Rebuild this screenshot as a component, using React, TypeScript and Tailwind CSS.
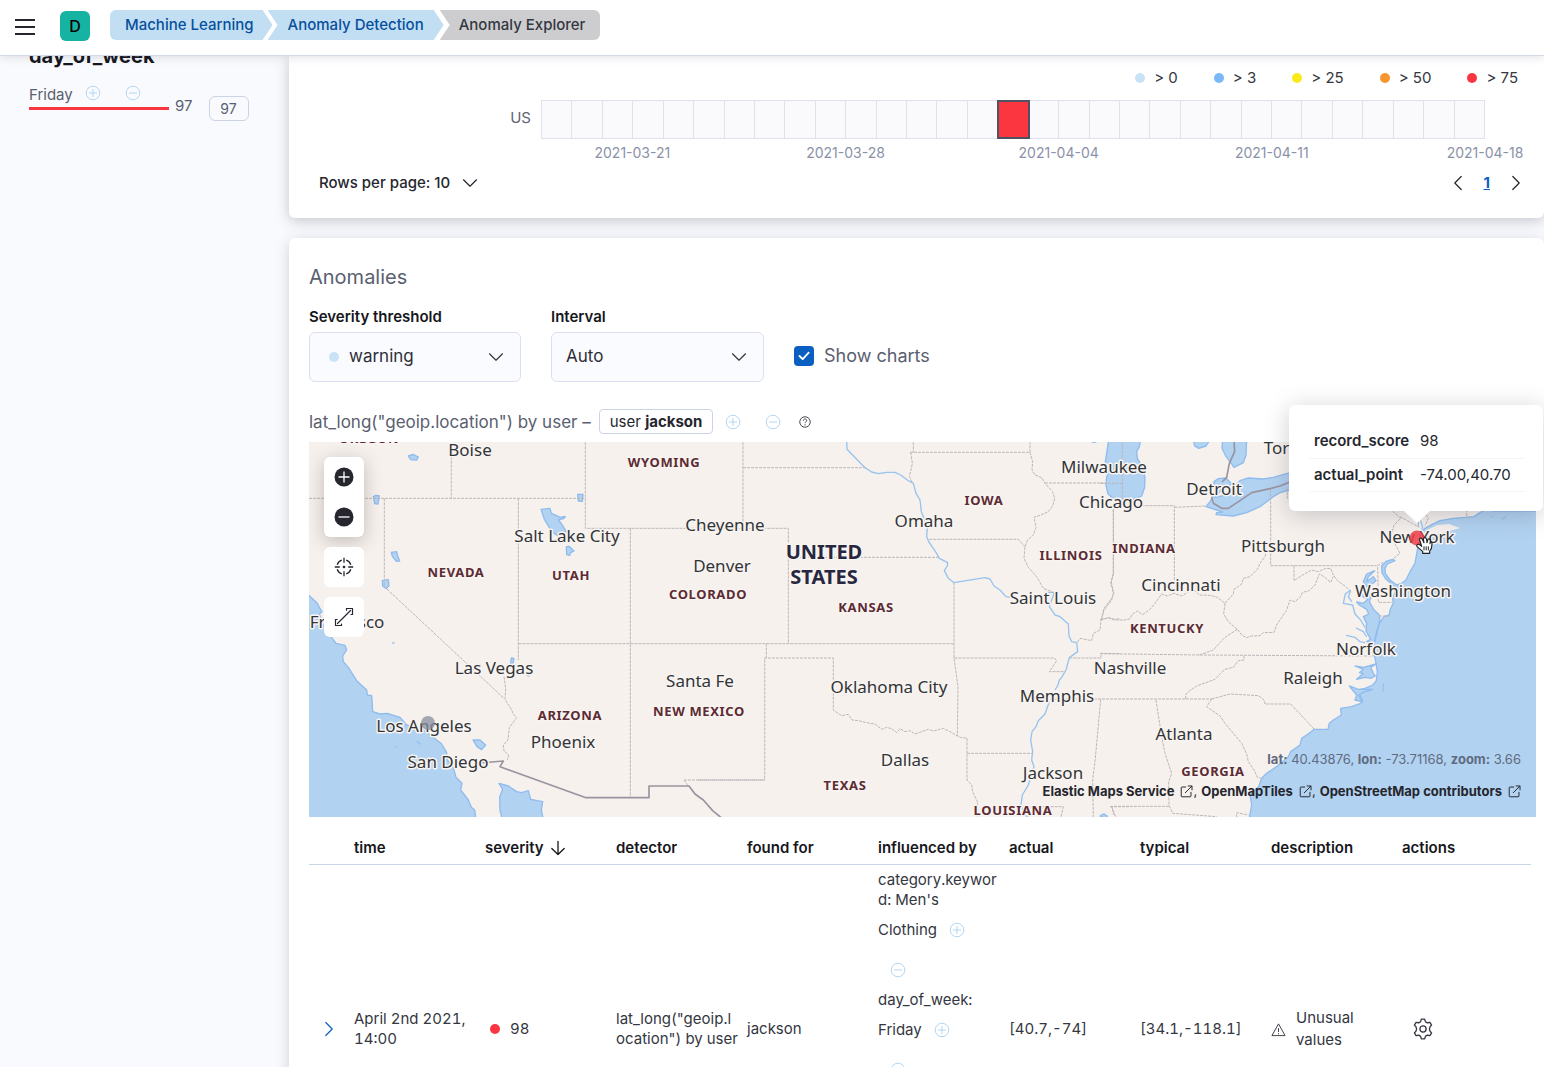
import React from "react";

type IconProps = { className?: string };

const PlusCircle = ({ className = "size-4" }: IconProps) => (
  <svg viewBox="0 0 16 16" fill="none" stroke="currentColor" className={className} aria-hidden="true">
    <circle cx="8" cy="8" r="6.8" />
    <path d="M8 4v8M4 8h8" />
  </svg>
);

const MinusCircle = ({ className = "size-4" }: IconProps) => (
  <svg viewBox="0 0 16 16" fill="none" stroke="currentColor" className={className} aria-hidden="true">
    <circle cx="8" cy="8" r="6.8" />
    <path d="M4 8h8" />
  </svg>
);

const Chevron = ({ className = "" }: IconProps) => (
  <svg viewBox="0 0 16 16" fill="none" stroke="currentColor" strokeWidth="1.2" strokeLinecap="round" strokeLinejoin="round" className={className} aria-hidden="true">
    <path d="M1.5 4.8 8 11.2l6.500-6.400" />
  </svg>
);

const Popout = () => (
  <svg viewBox="0 0 16 16" fill="none" stroke="currentColor" strokeWidth="1.2" strokeLinecap="round" strokeLinejoin="round" className="size-[13px]" aria-hidden="true">
    <path d="M7 2.500H2.500a1 1 0 0 0-1 1v10a1 1 0 0 0 1 1h10a1 1 0 0 0 1-1V9M10 1.200h4.800V6M14.500 1.500 6.500 9.500" />
  </svg>
);

const Gear = () => (
  <svg viewBox="0 0 20 20" fill="none" stroke="currentColor" strokeWidth="1.200" strokeLinejoin="round" className="size-[22px]" aria-hidden="true">
    <path d="M8.500 1h3l.6 1.900q.6 1.500 2.200 1.400l2-.4 1.500 2.600-1.400 1.500q-1.200 2 0 4l1.400 1.500-1.500 2.600-2-.4q-1.600-.1-2.200 1.400l-.6 1.900h-3l-.6-1.900q-.6-1.500-2.200-1.400l-2 .4-1.500-2.600 1.400-1.500q1.200-2 0-4l-1.400-1.500 1.500-2.600 2 .4q1.600.1 2.200-1.400z" />
    <circle cx="10" cy="10" r="2.800" />
  </svg>
);

function FilterButton({ kind, label }: { kind: "add" | "remove"; label: string }) {
  return (
    <button type="button" aria-label={label} className="flex size-10 shrink-0 items-center justify-center text-[#b3d6f2]">
      {kind === "add" ? <PlusCircle /> : <MinusCircle />}
    </button>
  );
}

function Header() {
  return (
    <header className="relative z-20 flex h-14 shrink-0 items-start border-b border-[#d3dae6] bg-white pt-[10px] pl-[15px] shadow-[0_2px_8px_rgba(60,65,80,0.14)]">
      <button type="button" aria-label="Toggle navigation" className="mt-[9px] flex h-4 w-5 flex-col justify-between">
        <span className="h-[2px] w-full bg-[#25262e]" />
        <span className="h-[2px] w-full bg-[#25262e]" />
        <span className="h-[2px] w-full bg-[#25262e]" />
      </button>
      <button type="button" aria-label="Default space" className="mt-px ml-[25px] flex size-[30px] items-center justify-center rounded-md bg-[#16b3a3] text-base font-medium text-black">
        D
      </button>
      <nav aria-label="Breadcrumbs" className="ml-5 flex text-[15px] leading-[30px] font-medium">
        <a href="#ml" className="rounded-l-md bg-[#c1def3] pr-[19px] pl-[15px] text-[#07509c] [clip-path:polygon(0_0,calc(100%-10px)_0,100%_50%,calc(100%-10px)_100%,0_100%)]">
          Machine Learning
        </a>
        <a href="#anomaly-detection" className="-ml-[5px] bg-[#c1def3] px-5 text-[#07509c] [clip-path:polygon(0_0,calc(100%-10px)_0,100%_50%,calc(100%-10px)_100%,0_100%,10px_50%)]">
          Anomaly Detection
        </a>
        <span aria-current="page" className="-ml-1 rounded-r-md bg-[#cdcdcf] pr-[15px] pl-[19px] text-[#343741] [clip-path:polygon(0_0,100%_0,100%_100%,0_100%,10px_50%)]">
          Anomaly Explorer
        </span>
      </nav>
    </header>
  );
}

function Influencers() {
  return (
    <aside className="w-[289px] shrink-0 px-[29px] text-[#5a6070]">
      <h2 className="-mt-3 text-xl leading-6 font-bold text-[#16171c]">day_of_week</h2>
      <div className="mt-[5px] flex">
        <div className="w-[140px]">
          <div className="flex h-10 items-center">
            <span className="pt-1 text-[15px]">Friday</span>
            <FilterButton kind="add" label="Add Friday filter" />
            <FilterButton kind="remove" label="Remove Friday filter" />
          </div>
          <div className="-mt-[6px] h-[3px] bg-[#fb3640]" />
        </div>
        <span className="mt-[23px] ml-[6px] text-[15px] leading-5">97</span>
        <span className="mt-[23px] ml-4 h-[25px] w-10 rounded-md border border-[#cdd3e6] text-center text-sm leading-[23px]">97</span>
      </div>
    </aside>
  );
}

const LEGEND = [
  { color: "bg-[#c8e3f6]", text: "> 0" },
  { color: "bg-[#79b9f8]", text: "> 3" },
  { color: "bg-[#fbea1a]", text: "> 25" },
  { color: "bg-[#f79530]", text: "> 50" },
  { color: "bg-[#fb3640]", text: "> 75" },
];

const TICKS = [
  { date: "2021-03-21", place: "col-start-1 col-span-6 text-center" },
  { date: "2021-03-28", place: "col-start-8 col-span-6 text-center" },
  { date: "2021-04-04", place: "col-start-15 col-span-6 text-center" },
  { date: "2021-04-11", place: "col-start-22 col-span-6 text-center" },
  { date: "2021-04-18", place: "col-start-29 col-span-3 justify-self-end translate-x-1/2" },
];

function Swimlane() {
  return (
    <section className="rounded-b-md bg-white pr-2 pb-[25px] pl-5 shadow-[0_3px_14px_rgba(60,65,80,0.28)]">
      <ul className="flex justify-end gap-9 pt-3 pr-[18px] text-[15px] leading-5 text-[#343741]">
        {LEGEND.map((l) => (
          <li key={l.text} className="flex items-center gap-[9px]">
            <span className={`size-[10px] rounded-full ${l.color}`} />
            {l.text}
          </li>
        ))}
      </ul>
      <div className="mt-3 flex pr-[51px]">
        <div className="w-[232px] shrink-0 pr-[10px] text-right text-[15px] leading-9 text-[#5f6575]">US</div>
        <div className="min-w-0 flex-1">
          <div className="grid h-[39px] grid-cols-[repeat(31,minmax(0,1fr))] border-y border-r border-[#dde2ed] bg-[#fafafc]">
            {Array.from({ length: 31 }, (_, i) => (
              <div
                key={i}
                className={
                  i === 15
                    ? "relative -mt-px -mr-[2px] -mb-px border-2 border-[#4f5361] bg-[#fb3640]"
                    : "border-l border-[#dde2ed]"
                }
              />
            ))}
          </div>
          <div className="mt-1 grid grid-cols-[repeat(31,minmax(0,1fr))] text-sm leading-5 text-[#8a92a8]">
            {TICKS.map((t) => (
              <span key={t.date} className={`row-start-1 whitespace-nowrap ${t.place}`}>
                {t.date}
              </span>
            ))}
          </div>
        </div>
      </div>
      <div className="mt-[10px] flex items-center justify-between pr-3 pl-[10px] text-[15px] leading-5 text-[#25262e]">
        <button type="button" className="flex items-center gap-3 font-medium">
          Rows per page: 10 <Chevron className="size-4" />
        </button>
        <nav aria-label="Pages" className="flex items-center gap-[18px]">
          <button type="button" aria-label="Previous page">
            <Chevron className="size-4 rotate-90" />
          </button>
          <a href="#page-1" className="font-bold text-[#0b5fc1] underline">
            1
          </a>
          <button type="button" aria-label="Next page">
            <Chevron className="size-4 -rotate-90" />
          </button>
        </nav>
      </div>
    </section>
  );
}

function Controls() {
  return (
    <div className="mt-4 flex items-end gap-[30px]">
      <div>
        <label htmlFor="severity" className="block text-[15px] leading-5 font-semibold text-[#16171c]">
          Severity threshold
        </label>
        <div className="relative mt-[5px]">
          <select id="severity" className="h-[50px] w-[212px] appearance-none rounded-md border border-[#dcdff0] bg-[#fafbfe] pl-[39px] text-[17px] text-[#2c2e38]">
            <option>warning</option>
          </select>
          <span className="pointer-events-none absolute top-5 left-5 size-[10px] rounded-full bg-[#c8e3f6]" />
          <Chevron className="pointer-events-none absolute top-[17px] right-[17px] size-4 text-[#343741]" />
        </div>
      </div>
      <div>
        <label htmlFor="interval" className="block text-[15px] leading-5 font-semibold text-[#16171c]">
          Interval
        </label>
        <div className="relative mt-[5px]">
          <select id="interval" className="h-[50px] w-[213px] appearance-none rounded-md border border-[#dcdff0] bg-[#fafbfe] pl-[14px] text-[17px] text-[#2c2e38]">
            <option>Auto</option>
          </select>
          <Chevron className="pointer-events-none absolute top-[17px] right-[17px] size-4 text-[#343741]" />
        </div>
      </div>
      <label htmlFor="show-charts" className="relative mb-3 flex items-center gap-[10px] text-lg text-[#5a6070]">
        <input id="show-charts" type="checkbox" defaultChecked className="size-5 appearance-none rounded-[4px] bg-[#0b5fc1]" />
        <svg viewBox="0 0 20 20" fill="none" stroke="white" strokeWidth="1.8" strokeLinecap="round" strokeLinejoin="round" className="pointer-events-none absolute left-0 size-5" aria-hidden="true">
          <path d="m5.500 10 3.200 3.200 6-6.500" />
        </svg>
        Show charts
      </label>
    </div>
  );
}

const CITIES: [string, number, number][] = [
  ["Boise", 470, 456],
  ["Salt Lake City", 567, 542],
  ["Cheyenne", 725, 531],
  ["Denver", 722, 572],
  ["Santa Fe", 700, 687],
  ["Las Vegas", 494, 674],
  ["Los Angeles", 424, 732],
  ["San Diego", 448, 768],
  ["Phoenix", 563, 748],
  ["Omaha", 924, 527],
  ["Oklahoma City", 889, 693],
  ["Dallas", 905, 766],
  ["Saint Louis", 1053, 604],
  ["Memphis", 1057, 702],
  ["Jackson", 1053, 779],
  ["Nashville", 1130, 674],
  ["Milwaukee", 1104, 473],
  ["Chicago", 1111, 508],
  ["Detroit", 1214, 495],
  ["Pittsburgh", 1283, 552],
  ["Cincinnati", 1181, 591],
  ["New York", 1417, 543],
  ["Washington", 1403, 597],
  ["Norfolk", 1366, 655],
  ["Raleigh", 1313, 684],
  ["Atlanta", 1184, 740],
  ["Toronto", 1295, 454],
  ["Francisco", 347, 628],
];

const STATES: [string, number, number][] = [
  ["OREGON", 369, 443],
  ["WYOMING", 664, 467],
  ["NEVADA", 456, 577],
  ["UTAH", 571, 580],
  ["COLORADO", 708, 599],
  ["ARIZONA", 570, 720],
  ["NEW MEXICO", 699, 716],
  ["KANSAS", 866, 612],
  ["TEXAS", 845, 790],
  ["IOWA", 984, 505],
  ["ILLINOIS", 1071, 560],
  ["INDIANA", 1144, 553],
  ["KENTUCKY", 1167, 633],
  ["GEORGIA", 1213, 776],
  ["LOUISIANA", 1013, 815],
];

const NATION = "UNITED STATES".split(" ");

/* The base map is digitised in three tiles, west to east, each at three units per map pixel. */
const TILES = [
  {
    transform: "translate(300 430) scale(0.33333)",
    water: [
      "M20 490L52 520 58 532 66 545 58 552 64 568 72 590 95 622 108 640 135 646 140 660 128 678 130 695 145 712 170 752 200 780 202 795 215 797 218 845 240 852 262 850 300 862 320 885 370 900 398 920 425 942 440 968 442 990 460 1012 468 1042 486 1060 482 1080 505 1110 514 1132 524 1140 528 1170 20 1170Z",
      "M597 1060L625 1068 650 1085 665 1088 685 1082 692 1108 728 1115 724 1140 730 1170 607 1170 600 1140 599 1100 608 1078Z",
      "M325 78l14-5 16 8-5 9-18-1z",
      "M220 200l8-4 10 2-4 24-10-1z",
      "M833 193h16l-2 21-12-1z",
      "M723 238L750 235 754 250 770 257 780 262 796 259 792 265 775 270 785 282 799 305 775 318 762 310 748 292 733 268Z",
      "M799 350l8-1 15 14-10 5-3 8-9-2z",
      "M274 367l16-2 3 13 6 15-10 1-12-15z",
      "M247 452l18-3 2 18-8 9-11-8z",
      "M519 930l21 0 17 15-12 14-14-9z",
      "M634 684l8 2-5 22-6-2z",
    ],
    rivers: ["M276 639h8", "M350 935l14 8", "M284 950l6 2", "M680 736l10 2"],
    borders: [
      "M27 205H856",
      "M454 80V205",
      "M253 205V470L612 805",
      "M655 205V690",
      "M856 37V295H1465V641",
      "M655 641H1963",
      "M991 295V1103",
      "M612 740L617 775 615 808 635 840 640 852 650 863 628 893 624 930 610 945 612 963 626 975 622 990",
      "M1152 1050H1394",
      "M1152 1050L1165 1068",
    ],
    frontier: ["M540 999L610 993 600 1010 858 1103 1047 1103 1047 1068 1167 1068 1185 1092 1210 1110 1238 1142 1266 1165"],
  },
  {
    transform: "translate(700 430) scale(0.33333)",
    water: ["M1205 1156l8-4 8 10-6 4z"],
    rivers: [
      "M440 30L441 58 495 113 515 126 535 131 560 127 585 127 602 135 622 150 640 160 648 190 660 210 664 245 672 265 682 290 680 320 688 338 710 370 718 385 743 398 742 408 733 422 745 445 762 458 855 443 870 447 882 468 900 480 918 500 932 502",
      "M1040 487L1063 488 1055 510 1048 530 1065 555 1080 560 1105 582 1107 618 1115 635 1130 638 1133 665 1108 683 1098 720 1085 742 1078 750 1074 765 1065 780",
      "M1048 815L1035 852 1015 872 1008 890 996 905 992 930 998 965 995 990 1002 1010 985 1065 967 1095 963 1125 972 1150 990 1170",
      "M1175 37h14",
    ],
    borders: [
      "M129 37V295",
      "M129 113H495",
      "M264 382H715",
      "M640 37V67",
      "M630 67H990V37",
      "M632 67L637 100 633 120 628 138 637 158",
      "M990 67L998 95 996 120 1005 135 1025 143 1035 160 1058 185 1064 205 1058 228 1045 245 1020 256 1002 262 1008 292 1000 315 983 330 975 350 972 385 985 412 1010 440 1030 475 1063 488",
      "M1035 159H1270",
      "M688 328H955L975 350",
      "M762 458V684L767 720 774 770 772 918",
      "M199 641V684",
      "M-6 1050H194V684H400V840L425 857 445 853 456 870 475 872 510 880 525 882 545 898 560 892 575 896 590 908 600 896 615 905 630 902 645 912 665 905 685 898 700 903 730 895 750 905 772 918 782 922 801 925",
      "M763 684H1063L1070 692 1048 725H1095",
      "M1108 684H1203V670L1260 671",
      "M801 925V1050L815 1065 818 1085 832 1115 834 1165",
      "M801 970H996",
      "M1050 807H1535",
      "M1202 808L1186 985 1178 1050 1180 1165",
      "M980 1130H1090L1082 1165",
      "M1235 1130l12 30M1230 1130h60",
      "M1240 240V430L1234 455 1240 490 1235 510 1212 540 1203 570 1200 600 1180 610 1175 632 1140 625 1130 640",
      "M1203 570L1225 563 1240 570 1260 565",
    ],
    frontier: [],
  },
  {
    transform: "translate(1100 390) scale(0.33333)",
    water: [
      "M26 150H122L118 170 110 185 112 205 124 225 135 262 134 292 125 318 100 328 75 335 45 330 24 312 18 285 20 262 27 240 16 215 20 190Z",
      "M368 150H440L438 195 430 218 402 232 390 215 376 196 366 175Z",
      "M280 150H330L318 168 296 175 284 168Z",
      "M342 275L355 266 378 264 395 282 378 292 358 306 345 322 365 318 385 305 405 288 420 272 445 264 490 267 520 262 570 248V300L540 308 520 320 500 335 480 350 440 368 400 378 348 374 350 368 368 366 318 350 330 335 340 318 350 300 342 290Z",
      "M1320 363H1175L1165 355 1140 368 1122 380 1060 385 1020 392 998 402 975 415 958 430 962 450 952 480 945 520 930 545 918 570 905 580 890 585 870 570 856 550 855 535 862 522 885 512 878 508 858 514 845 528 846 548 858 568 878 584 885 605 878 625 880 640 870 660 868 675 852 680 838 700 832 722 828 742 820 765 818 785 824 800 828 820 832 845 829 872 818 885 795 895 772 900 788 932 782 940 755 950 722 955 724 975 700 990 688 1000 684 1018 643 1018 620 1035 605 1045 600 1065 572 1085 565 1100 530 1130 500 1150 485 1165 476 1190 450 1215 455 1245 447 1290 1320 1290Z",
      "M824 542L800 552 790 575 806 598 778 605 785 618 804 628 790 640 770 636 778 645 800 658 806 672 790 680 800 700 798 722 812 748 800 755 822 760 830 725 840 690 838 675 822 660 808 635 815 618 805 600 812 585 828 572 820 560 800 575 805 560Z",
      "M765 828L790 832 828 822 812 832 820 850 826 858 812 865 795 862 770 868 790 850 778 848 790 838Z",
      "M748 888L775 898 818 898 795 905 775 915 786 935 765 930 770 915Z",
      "M0 1278l10-6 12 6-6 8z",
    ],
    rivers: [
      "M752 600L736 612 730 640 758 645 765 672 782 690 795 712",
      "M752 602L745 620 755 635",
      "M738 736L765 742 780 755 795 758",
      "M768 714L790 725 800 740",
      "M962 392L968 412 960 430",
      "M955 395v15",
      "M1172 380h6M1205 388l12-8M1240 366l6-2",
      "M850 880v25",
    ],
    borders: [
      "M67 157V330",
      "M0 280H72",
      "M125 347H223V580",
      "M223 352L318 348",
      "M40 345V552L32 580 42 610 35 625 12 655 5 690",
      "M0 690L28 683 50 690 75 690 90 686 98 672 112 663 128 674 150 658 165 640 185 612 202 618 222 610 245 618 262 608 280 598 298 615 330 616 352 622 375 640 400 612 402 598 425 582 430 565 450 560 472 538 480 520 495 500 500 480",
      "M512 298V527H830",
      "M562 295V325H572",
      "M582 527V572L600 560 620 548 635 540 655 545 675 536 692 535 700 555 712 572 735 588 750 602",
      "M375 640L371 672 385 695 412 718 425 735 440 743 455 738 480 737 490 728 522 727 530 705 560 660 570 630 585 635 600 622 608 607 628 602 645 585 658 552 672 560 692 577 700 560",
      "M412 718L375 742 360 758 340 780 298 795",
      "M0 791L300 795 820 798",
      "M432 797V810L415 812 400 832 375 838 362 850 345 868 290 888 268 903 258 912 257 927",
      "M335 927L390 912 475 917 492 930 495 942H572L643 1018",
      "M335 927L320 950 360 978 375 1000 400 1030 425 1060 440 1092 445 1115 462 1140 472 1162 485 1165",
      "M168 930L185 1040 195 1090 215 1150 206 1175 207 1245 218 1270 350 1280",
      "M207 1249H35L42 1275",
      "M410 1282V1268L445 1275",
      "M850 517L833 527 835 637H878",
      "M838 678H868",
      "M878 363L902 385 882 405 873 440 900 490 878 508",
      "M900 380L958 412",
      "M972 363L985 385 975 408",
      "M1100 345V382H1110",
    ],
    frontier: [
      "M402 150L404 185 388 220 380 262 366 276",
      "M335 320L340 340 365 355 385 355 420 332 455 308 510 296 540 288 570 276",
    ],
  },
];

const HALO = "[paint-order:stroke] stroke-[#f8f4f1] [stroke-linejoin:round]";

function BaseMap() {
  return (
    <svg viewBox="309 442 1227 375" preserveAspectRatio="xMidYMid slice" className="h-[375px] w-full bg-[#f6f1ed]" role="img" aria-label="Map of the United States">
      {TILES.map((t) => (
        <g key={t.transform} transform={t.transform} fill="none" strokeLinejoin="round">
          {t.water.map((d) => (
            <path key={d} d={d} fill="#b2d2f1" stroke="#8fbcee" strokeWidth="4" />
          ))}
          {t.rivers.map((d) => (
            <path key={d} d={d} stroke="#97c3ef" strokeWidth="4" />
          ))}
          {t.borders.map((d) => (
            <path key={d} d={d} stroke="#bcb6ba" strokeWidth="3" strokeDasharray="9 3" />
          ))}
          {t.frontier.map((d) => (
            <path key={d} d={d} stroke="#9a93a0" strokeWidth="5" />
          ))}
        </g>
      ))}
      <path d="M1425 531l12-6 12-1 11 4-14 4-14 3-8 0z" fill="#f6f1ed" />
      <g textAnchor="middle" className={`fill-[#333438] font-['Noto_Sans',sans-serif] text-[17px] ${HALO}`} strokeWidth="3">
        {CITIES.map(([name, x, y]) => (
          <text key={name} x={x} y={y}>
            {name}
          </text>
        ))}
      </g>
      <g textAnchor="middle" className={`fill-[#5d2b33] font-['Noto_Sans',sans-serif] text-[13px] font-bold tracking-wider ${HALO}`} strokeWidth="3">
        {STATES.map(([name, x, y]) => (
          <text key={name} x={x} y={y}>
            {name}
          </text>
        ))}
      </g>
      <g textAnchor="middle" className={`fill-[#272740] font-['Noto_Sans',sans-serif] text-xl font-bold ${HALO}`} strokeWidth="3">
        {NATION.map((word, i) => (
          <text key={word} x="824" y={559 + i * 25}>
            {word}
          </text>
        ))}
      </g>
      <circle cx="428" cy="723" r="7" fill="#868d9f" fillOpacity="0.75" />
      <circle cx="1417" cy="538" r="7.500" fill="#f03e49" fillOpacity="0.85" />
      <g transform="translate(1330 500) scale(0.33333)" stroke="#222" strokeLinejoin="round">
        <path
          d="M270 123C265 114 274 111 278 120L282 128 280 119C280 111 289 111 290 119L291 128 293 121C294 114 302 116 301 123L300 131C301 124 307 126 306 132L304 146 299 153V160H278V154L261 140C258 134 265 130 270 135L275 139Z"
          fill="white"
          strokeWidth="3.500"
        />
        <path d="M282 139v12M288.500 139v12M295 139v12" fill="none" strokeWidth="3" />
      </g>
    </svg>
  );
}

const SOURCES = ["Elastic Maps Service", "OpenMapTiles", "OpenStreetMap contributors"];

function AnomalyMap() {
  return (
    <div className="relative mt-2 text-[#25262e]">
      <div className="h-[375px] overflow-hidden">
        <BaseMap />
      </div>
      <div className="absolute top-[15px] left-[15px] flex w-10 flex-col gap-[10px]">
        <div className="rounded-md bg-white shadow-[0_4px_18px_rgba(60,50,40,0.28)]">
          <button type="button" aria-label="Zoom in" className="flex size-10 items-center justify-center">
            <svg viewBox="0 0 20 20" className="size-5" stroke="white" strokeWidth="1.300" aria-hidden="true">
              <circle cx="10" cy="10" r="9.500" fill="#25262e" stroke="none" />
              <path d="M10 4.500v11M4.500 10h11" />
            </svg>
          </button>
          <button type="button" aria-label="Zoom out" className="flex size-10 items-center justify-center">
            <svg viewBox="0 0 20 20" className="size-5" stroke="white" strokeWidth="1.300" aria-hidden="true">
              <circle cx="10" cy="10" r="9.500" fill="#25262e" stroke="none" />
              <path d="M4.500 10h11" />
            </svg>
          </button>
        </div>
        <button type="button" aria-label="Fit to data" className="flex size-10 items-center justify-center rounded-md bg-white">
          <svg viewBox="0 0 20 20" className="size-5" fill="none" stroke="currentColor" strokeWidth="1.300" aria-hidden="true">
            <path d="M12.200 3.200a7.200 7.200 0 0 1 4.600 4.600M16.800 12.200a7.200 7.200 0 0 1-4.600 4.600M7.800 16.800a7.200 7.200 0 0 1-4.600-4.600M3.200 7.800a7.200 7.200 0 0 1 4.600-4.600M10 .8v5M10 14.200v5M.8 10h5M14.200 10h5" />
            <circle cx="10" cy="10" r="1.300" fill="currentColor" stroke="none" />
          </svg>
        </button>
        <button type="button" aria-label="Full screen" className="flex size-10 items-center justify-center rounded-md bg-white">
          <svg viewBox="0 0 20 20" className="size-5" fill="none" stroke="currentColor" strokeWidth="1.200" strokeLinecap="round" strokeLinejoin="round" aria-hidden="true">
            <path d="M3.500 16.500l13-13M12.500 1.500h6v6M1.500 12.500v6h6" />
            <path d="M12.500 1.500v1.700M17 7.500h1.500M1.500 12.500h1.700M7.500 18.500V17" />
          </svg>
        </button>
      </div>
      <div className="absolute right-[15px] bottom-4 flex flex-col items-end gap-3 text-[13px] leading-5">
        <p className="text-[#5f6b80]">
          <strong>lat:</strong> 40.43876, <strong>lon:</strong> -73.71168, <strong>zoom:</strong> 3.66
        </p>
        <p className="flex font-bold">
          {SOURCES.map((s, i) => (
            <React.Fragment key={s}>
              <a href="#source" className="flex items-center gap-[6px]">
                {s} <Popout />
              </a>
              {i < SOURCES.length - 1 && <span className="mr-1 font-normal">,</span>}
            </React.Fragment>
          ))}
        </p>
      </div>
      <div className="absolute -top-[37px] -right-[7px] h-[106px] w-[254px] rounded-md bg-white px-5 pt-5 text-[15px] shadow-[0_4px_24px_rgba(60,60,80,0.26)]">
        <table className="w-[216px] leading-5">
          <tbody>
            {[
              ["record_score", "98"],
              ["actual_point", "-74.00,40.70"],
            ].map(([k, v]) => (
              <tr key={k} className="h-[33px] border-b border-[#f4f5f8]">
                <th scope="row" className="w-[111px] pl-[5px] text-left text-[15px] font-semibold">
                  {k}
                </th>
                <td>{v}</td>
              </tr>
            ))}
          </tbody>
        </table>
        <div className="absolute top-full left-[115px] h-3 w-[26px] bg-white [clip-path:polygon(0_0,100%_0,50%_100%)]" />
      </div>
    </div>
  );
}

function Influence({ text, last }: { text: string; last: string }) {
  return (
    <div>
      <div className="w-[122px] break-all">{text}</div>
      <div className="flex h-10 items-center">
        {last}
        <FilterButton kind="add" label={`Add ${last} filter`} />
      </div>
      <FilterButton kind="remove" label={`Remove ${last} filter`} />
    </div>
  );
}

const HEADINGS = ["time", "severity", "detector", "found for", "influenced by", "actual", "typical", "description", "actions"];

function AnomaliesTable() {
  return (
    <div className="pr-[5px]">
      <table className="mt-[15px] w-full table-fixed text-left text-[15px] leading-5 text-[#343741]">
        <thead>
          <tr className="h-8 border-b border-[#ccd6ea] text-[#16171c]">
            <th className="w-[45px]" aria-label="Expand" />
            {HEADINGS.map((h) => (
              <th key={h} scope="col" className="w-[131px] font-semibold whitespace-nowrap last:w-auto">
                {h === "severity" ? (
                  <button type="button" className="flex items-center gap-[6px]">
                    severity
                    <svg viewBox="0 0 16 16" className="size-4" fill="none" stroke="currentColor" strokeWidth="1.300" strokeLinecap="round" strokeLinejoin="round" aria-hidden="true">
                      <path d="M8 1.500v13M1.800 8.500 8 14.500l6.200-6" />
                    </svg>
                  </button>
                ) : (
                  h
                )}
              </th>
            ))}
          </tr>
        </thead>
        <tbody>
          <tr className="h-[330px] tabular-nums">
            <td className="pl-3 text-[#0b5fc1]">
              <button type="button" aria-label="Show details" className="block">
                <Chevron className="size-4 -rotate-90" />
              </button>
            </td>
            <td>April 2nd 2021, 14:00</td>
            <td>
              <span className="flex items-center gap-[10px] pl-[5px]">
                <span className="size-[10px] rounded-full bg-[#fb3640]" />
                98
              </span>
            </td>
            <td>
              <div className="w-[122px] break-all">lat_long("geoip.location") by user</div>
            </td>
            <td>jackson</td>
            <td className="pt-[5px] align-top">
              <Influence text="category.keyword: Men's" last="Clothing" />
              <Influence text="day_of_week:" last="Friday" />
            </td>
            <td>[40.7,-74]</td>
            <td>[34.1,-118.1]</td>
            <td>
              <div className="flex items-center gap-[10px] leading-[22px]">
                <svg viewBox="0 0 16 16" className="size-[15px] shrink-0" fill="none" stroke="currentColor" strokeLinejoin="round" aria-hidden="true">
                  <path d="M8 2 15 14.500H1zM8 6.500v4.200M8 12v1.200" />
                </svg>
                Unusual values
              </div>
            </td>
            <td className="pl-[10px]">
              <button type="button" aria-label="Actions" className="block">
                <Gear />
              </button>
            </td>
          </tr>
        </tbody>
      </table>
    </div>
  );
}

function Anomalies() {
  return (
    <section className="mt-5 rounded-t-md bg-white pt-[25px] pr-2 pl-5 shadow-[0_3px_14px_rgba(60,65,80,0.22)]">
      <h2 className="text-xl leading-7 text-[#5a6070]">Anomalies</h2>
      <Controls />
      <div className="mt-[27px] flex h-[25px] items-center">
        <h3 className="text-[17px] leading-6 text-[#5a6070]">lat_long("geoip.location") by user –</h3>
        <span className="ml-2 rounded-[4px] border border-[#cdd3e6] px-[10px] text-[15px] leading-[23px] text-[#25262e]">
          user <strong className="font-bold">jackson</strong>
        </span>
        <FilterButton kind="add" label="Add jackson filter" />
        <FilterButton kind="remove" label="Remove jackson filter" />
        <svg viewBox="0 0 16 16" className="ml-[6px] size-3 text-[#343741]" fill="none" stroke="currentColor" strokeWidth="1.200" aria-hidden="true">
          <circle cx="8" cy="8" r="7" />
          <path d="M5.800 6.300C5.800 3.200 10.400 3.300 10.300 6.200 10.200 7.800 8 7.900 8 9.600M8 11v1.600" />
        </svg>
      </div>
      <AnomalyMap />
      <AnomaliesTable />
    </section>
  );
}

export default function App() {
  return (
    <div className="flex h-screen flex-col overflow-hidden bg-[#f9fafd] font-['Inter',sans-serif]">
      <Header />
      <div className="flex min-h-0 flex-1 overflow-hidden">
        <Influencers />
        <main className="min-w-0 flex-1">
          <Swimlane />
          <Anomalies />
        </main>
      </div>
    </div>
  );
}
